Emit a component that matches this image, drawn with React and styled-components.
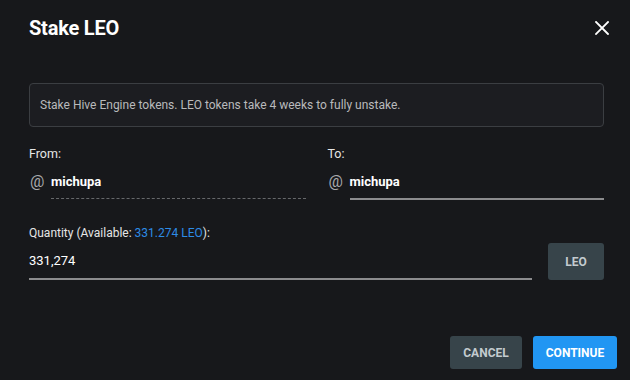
import React from 'react';
import styled, { createGlobalStyle } from 'styled-components';

const GlobalStyle = createGlobalStyle`
  html, body {
    margin: 0;
    padding: 0;
    background: #17181b;
  }
  * {
    box-sizing: border-box;
  }
`;

const Dialog = styled.div`
  width: 630px;
  height: 380px;
  background: #17181b;
  color: #fff;
  font-family: Roboto, "Liberation Sans", sans-serif;
  display: flex;
  flex-direction: column;
`;

const Header = styled.div`
  display: flex;
  align-items: center;
  justify-content: space-between;
  padding: 0 18px 0 29px;
  height: 56px;
`;

const Title = styled.h2`
  margin: 0;
  font-size: 20px;
  font-weight: 700;
  letter-spacing: -0.2px;
  color: #fff;
`;

const CloseButton = styled.button`
  background: none;
  border: none;
  padding: 0;
  width: 20px;
  height: 20px;
  display: flex;
  align-items: center;
  justify-content: center;
  cursor: pointer;
`;

const Body = styled.div`
  padding: 27px 26px 0 29px;
  display: flex;
  flex-direction: column;
`;

const InfoBox = styled.div`
  height: 44px;
  border: 1px solid #3b3e42;
  border-radius: 4px;
  background: #1c1d21;
  display: flex;
  align-items: center;
  padding: 0 10px;
  font-size: 12px;
  color: #b9babc;
`;

const Row = styled.div`
  display: grid;
  grid-template-columns: 1fr 1fr;
  column-gap: 22px;
  margin-top: 19px;
`;

const Field = styled.div`
  display: flex;
  flex-direction: column;
`;

const Label = styled.div`
  font-size: 12.5px;
  color: #e6e6e6;
  height: 16px;
  line-height: 16px;
`;

const UserLine = styled.div`
  display: flex;
  align-items: center;
  margin-top: 9px;
  height: 20px;
`;

const At = styled.span`
  width: 22px;
  padding-left: 1px;
  font-size: 16px;
  color: #a8a9ab;
`;

const UserInput = styled.div`
  flex: 1;
  font-size: 13px;
  font-weight: 700;
  color: #fff;
`;

const Underline = styled.div`
  margin: 7px 0 0 22px;
  border-bottom: ${p => (p.$dashed ? '1px dashed #66686b' : '2px solid #8c8c8e')};
  height: ${p => (p.$dashed ? '1px' : '2px')};
`;

const QuantityRow = styled.div`
  display: flex;
  align-items: flex-end;
  gap: 16px;
  margin-top: 25px;
`;

const QuantityField = styled.div`
  flex: 1;
  display: flex;
  flex-direction: column;
`;

const QtyLabel = styled.div`
  font-size: 12px;
  color: #e6e6e6;
  height: 16px;
  line-height: 16px;
`;

const Available = styled.span`
  color: #2d8ce6;
`;

const Value = styled.div`
  margin-top: 10px;
  font-size: 13px;
  color: #fff;
  height: 20px;
  line-height: 20px;
`;

const QtyLine = styled.div`
  margin-top: 7px;
  height: 2px;
  background: #8c8c8e;
`;

const Button = styled.button`
  border: none;
  border-radius: 3px;
  font-family: Roboto, "Liberation Sans", sans-serif;
  font-size: 12px;
  font-weight: 700;
  text-transform: uppercase;
  cursor: pointer;
  height: ${p => p.$h || 33}px;
  width: ${p => p.$w}px;
  padding: 0;
  background: ${p => (p.$primary ? '#2196f3' : '#37444a')};
  color: ${p => (p.$primary ? '#fff' : '#c3cbcf')};
`;

const Footer = styled.div`
  margin-top: auto;
  display: flex;
  justify-content: flex-end;
  gap: 11px;
  padding: 0 13px 11px 0;
`;

export default function App() {
  return (
    <>
      <GlobalStyle />
      <Dialog>
        <Header>
          <Title>Stake LEO</Title>
          <CloseButton aria-label="Close">
            <svg width="14" height="14" viewBox="0 0 14 14">
              <path d="M1 1 L13 13 M13 1 L1 13" stroke="#fff" strokeWidth="1.8" strokeLinecap="square" />
            </svg>
          </CloseButton>
        </Header>
        <Body>
          <InfoBox>Stake Hive Engine tokens. LEO tokens take 4 weeks to fully unstake.</InfoBox>
          <Row>
            <Field>
              <Label>From:</Label>
              <UserLine>
                <At>@</At>
                <UserInput>michupa</UserInput>
              </UserLine>
              <Underline $dashed />
            </Field>
            <Field>
              <Label>To:</Label>
              <UserLine>
                <At>@</At>
                <UserInput>michupa</UserInput>
              </UserLine>
              <Underline />
            </Field>
          </Row>
          <QuantityRow>
            <QuantityField>
              <QtyLabel>
                Quantity (Available: <Available>331.274 LEO</Available>):
              </QtyLabel>
              <Value>331,274</Value>
              <QtyLine />
            </QuantityField>
            <Button $h={37} $w={56}>LEO</Button>
          </QuantityRow>
        </Body>
        <Footer>
          <Button $w={72}>Cancel</Button>
          <Button $primary $w={84}>Continue</Button>
        </Footer>
      </Dialog>
    </>
  );
}
